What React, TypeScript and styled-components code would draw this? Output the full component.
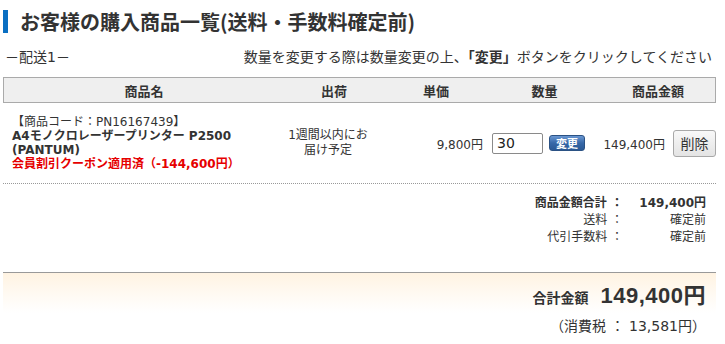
import styled, { createGlobalStyle } from "styled-components";

const FONT = `"DejaVu Sans", "Noto Sans CJK JP", sans-serif`;
const COLS = "280px 100px 104px 113px 1fr";

const GlobalStyle = createGlobalStyle`
  * { box-sizing: border-box; }
  body {
    margin: 0;
    background: #fff;
    color: #333;
    font-family: ${FONT};
  }
`;

const Page = styled.div`
  width: 716px;
  padding: 10px 0 0 3px;
`;

const Title = styled.h2`
  margin: 0;
  height: 23px;
  display: flex;
  align-items: center;
  border-left: 5px solid #0a6fc2;
  padding-left: 12px;
  font-family: "Noto Sans CJK JP", sans-serif;
  font-size: 20px;
  font-weight: bold;
  line-height: 23px;
  color: #333;
`;

const NoticeRow = styled.div`
  display: flex;
  justify-content: space-between;
  align-items: center;
  margin-top: 14px;
  padding: 0 4px 0 2px;
  font-size: 14px;
  line-height: 20px;
`;

const Strong = styled.strong`
  font-weight: bold;
`;

const HeaderRow = styled.div`
  display: grid;
  grid-template-columns: ${COLS};
  align-items: center;
  margin-top: 10px;
  height: 26px;
  border: 1px solid #aaa;
  background: #efefef;
  font-size: 13px;
  font-weight: bold;
  text-align: center;
`;

const ItemRow = styled.div`
  display: grid;
  grid-template-columns: ${COLS};
  align-items: center;
  height: 81px;
  border-bottom: 1px dotted #999;
  font-size: 12px;
`;

const ProductCell = styled.div`
  padding-left: 9px;
  line-height: 14px;
`;

const Line = styled.div<{ $bold?: boolean; $red?: boolean }>`
  font-weight: ${(p) => (p.$bold ? "bold" : "normal")};
  color: ${(p) => (p.$red ? "#e60000" : "#333")};
`;

const ShipCell = styled.div`
  padding: 0 14px 0 4px;
  text-align: center;
  line-height: 15px;
`;

const PriceCell = styled.div`
  padding-right: 4px;
  text-align: right;
`;

const QtyCell = styled.div`
  display: flex;
  align-items: center;
  gap: 6px;
  padding-left: 5px;
`;

const QtyInput = styled.input`
  width: 51px;
  height: 21px;
  padding: 0 4px;
  border: 1px solid #8a8a8a;
  border-radius: 2px;
  font-family: ${FONT};
  font-size: 14px;
  color: #222;
`;

const ChangeButton = styled.button`
  width: 36px;
  height: 16px;
  padding: 0;
  border: 1px solid #2b5284;
  border-radius: 3px;
  background: linear-gradient(#6a97d2, #3768a8 50%, #2a5894);
  color: #fff;
  font-family: "Noto Sans CJK JP", sans-serif;
  font-size: 11px;
  font-weight: bold;
  line-height: 14px;
`;

const AmountCell = styled.div`
  display: flex;
  align-items: center;
  justify-content: flex-end;
  gap: 8px;
`;

const DeleteButton = styled.button`
  width: 43px;
  height: 27px;
  padding: 0;
  border: 1px solid #a8a8a8;
  border-radius: 3px;
  background: linear-gradient(#f8f8f8, #e4e4e4);
  color: #333;
  font-family: "Noto Sans CJK JP", sans-serif;
  font-size: 14px;
`;

const Summary = styled.div`
  display: grid;
  grid-template-columns: auto 83px;
  justify-content: end;
  padding: 11px 10px 0 0;
  font-size: 12px;
  line-height: 17px;
`;

const SumLabel = styled.div<{ $bold?: boolean }>`
  text-align: right;
  font-weight: ${(p) => (p.$bold ? "bold" : "normal")};
`;

const SumValue = styled.div<{ $bold?: boolean }>`
  text-align: right;
  font-weight: ${(p) => (p.$bold ? "bold" : "normal")};
`;

const TotalBox = styled.div`
  margin-top: 26px;
  border-top: 1px solid #999;
  background: linear-gradient(#fff3e2 0, #fffaf3 22px, #fff 40px);
  padding: 10px 10px 0 0;
`;

const TotalRow = styled.div`
  display: flex;
  justify-content: flex-end;
  align-items: baseline;
  gap: 12px;
  line-height: 26px;
`;

const TotalLabel = styled.span`
  font-size: 14px;
  font-weight: bold;
`;

const TotalAmount = styled.span`
  font-family: "Liberation Sans", "Noto Sans CJK JP", sans-serif;
  font-size: 22px;
  font-weight: bold;
  letter-spacing: 0.5px;
`;

const TaxRow = styled.div`
  margin-top: 6px;
  text-align: right;
  font-size: 14px;
  line-height: 18px;
`;

export default function App() {
  return (
    <>
      <GlobalStyle />
      <Page>
        <Title>お客様の購入商品一覧(送料・手数料確定前)</Title>
        <NoticeRow>
          <span>－配送1－</span>
          <span>
            数量を変更する際は数量変更の上、<Strong>「変更」</Strong>
            ボタンをクリックしてください
          </span>
        </NoticeRow>

        <HeaderRow>
          <div>商品名</div>
          <div>出荷</div>
          <div>単価</div>
          <div>数量</div>
          <div>商品金額</div>
        </HeaderRow>

        <ItemRow>
          <ProductCell>
            <Line>【商品コード：PN16167439】</Line>
            <Line $bold>A4モノクロレーザープリンター P2500</Line>
            <Line $bold>(PANTUM)</Line>
            <Line $bold $red>
              会員割引クーポン適用済（-144,600円）
            </Line>
          </ProductCell>
          <ShipCell>1週間以内にお届け予定</ShipCell>
          <PriceCell>9,800円</PriceCell>
          <QtyCell>
            <QtyInput defaultValue="30" />
            <ChangeButton>変更</ChangeButton>
          </QtyCell>
          <AmountCell>
            <span>149,400円</span>
            <DeleteButton>削除</DeleteButton>
          </AmountCell>
        </ItemRow>

        <Summary>
          <SumLabel $bold>商品金額合計 ：</SumLabel>
          <SumValue $bold>149,400円</SumValue>
          <SumLabel>送料 ：</SumLabel>
          <SumValue>確定前</SumValue>
          <SumLabel>代引手数料 ：</SumLabel>
          <SumValue>確定前</SumValue>
        </Summary>

        <TotalBox>
          <TotalRow>
            <TotalLabel>合計金額</TotalLabel>
            <TotalAmount>149,400円</TotalAmount>
          </TotalRow>
          <TaxRow>（消費税 ： 13,581円）</TaxRow>
        </TotalBox>
      </Page>
    </>
  );
}
